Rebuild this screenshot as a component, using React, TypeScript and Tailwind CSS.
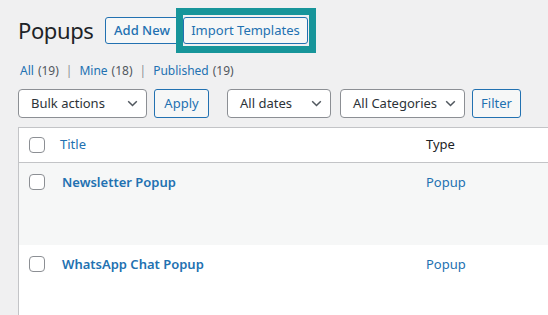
import React from "react";

function Chevron() {
  return (
    <svg width="11" height="7" viewBox="0 0 11 7" className="shrink-0">
      <polyline points="1.2,1.2 5.5,5.5 9.8,1.2" fill="none" stroke="#50575e" strokeWidth="1.5" />
    </svg>
  );
}

function Select({ label, w }: { label: string; w: string }) {
  return (
    <div
      className={`${w} flex h-[29px] items-center justify-between rounded-[4px] border border-[#8c8f94] bg-white pl-[12px] pr-[8px] text-[13px] text-[#2c3338]`}
    >
      <span>{label}</span>
      <Chevron />
    </div>
  );
}

function Button({ label, w }: { label: string; w: string }) {
  return (
    <div
      className={`${w} flex h-[29px] items-center justify-center rounded-[3px] border border-[#2271b1] bg-[#f6f7f7] text-[13px] text-[#2271b1]`}
    >
      {label}
    </div>
  );
}

function Checkbox() {
  return <div className="h-[16px] w-[16px] shrink-0 rounded-[4px] border border-[#8c8f94] bg-white" />;
}

export default function App() {
  const rows = [
    { title: "Newsletter Popup", bg: "bg-[#f6f7f7]" },
    { title: "WhatsApp Chat Popup", bg: "bg-white" },
  ];

  return (
    <div
      className="h-[315px] w-[548px] overflow-hidden bg-[#f0f0f1] pl-[18px] pt-[17px] text-[#1d2327]"
      style={{ fontFamily: '"Noto Sans", "Open Sans", sans-serif' }}
    >
      <div className="flex h-[27px] items-center">
        <h1 className="mr-[13px] w-[74px] whitespace-nowrap text-[22px] leading-[27px] font-normal tracking-[-0.4px] text-[#1d2327]">
          Popups
        </h1>
        <div className="flex h-[27px] w-[74px] items-center justify-center rounded-[3px] border border-[#2271b1] bg-[#f6f7f7] text-[13px] font-medium text-[#2271b1]">
          Add New
        </div>
        <div className="relative ml-[4px] flex h-[27px] w-[125px] items-center justify-center rounded-[3px] border border-[#2271b1] bg-[#f6f7f7] text-[13px] text-[#2271b1]">
          Import Templates
          <span className="absolute -top-[10px] -bottom-[10px] -left-[8px] -right-[9px] border-[7px] border-[#17959a]" />
        </div>
      </div>

      <div className="mt-[18px] flex h-[18px] items-center pl-[2px] text-[12px] text-[#50575e]">
        <span className="text-[#2271b1]">All</span>
        <span className="ml-[4px]">(19)</span>
        <span className="mx-[7px] text-[#8c8f94]">|</span>
        <span className="text-[#2271b1]">Mine</span>
        <span className="ml-[4px]">(18)</span>
        <span className="mx-[7px] text-[#8c8f94]">|</span>
        <span className="text-[#2271b1]">Published</span>
        <span className="ml-[4px]">(19)</span>
      </div>

      <div className="mt-[9px] flex items-center">
        <Select label="Bulk actions" w="w-[129px]" />
        <div className="ml-[7px]">
          <Button label="Apply" w="w-[55px]" />
        </div>
        <div className="ml-[18px]">
          <Select label="All dates" w="w-[104px]" />
        </div>
        <div className="ml-[9px]">
          <Select label="All Categories" w="w-[125px]" />
        </div>
        <div className="ml-[7px]">
          <Button label="Filter" w="w-[49px]" />
        </div>
      </div>

      <div className="mt-[9px] w-[560px] border border-[#c3c4c7] bg-white">
        <div className="flex h-[35px] items-center border-b border-[#c3c4c7] pl-[10px]">
          <Checkbox />
          <span className="ml-[15px] w-[366px] text-[13px] text-[#2271b1]">Title</span>
          <span className="text-[13px] text-[#1d2327]">Type</span>
        </div>
        {rows.map((r) => (
          <div key={r.title} className={`${r.bg} flex h-[82px] items-start pl-[10px] pt-[11px]`}>
            <Checkbox />
            <span className="ml-[17px] -mt-[1px] w-[364px] text-[13px] font-semibold text-[#2271b1]">{r.title}</span>
            <span className="-mt-[1px] text-[13px] text-[#2271b1]">Popup</span>
          </div>
        ))}
      </div>
    </div>
  );
}
